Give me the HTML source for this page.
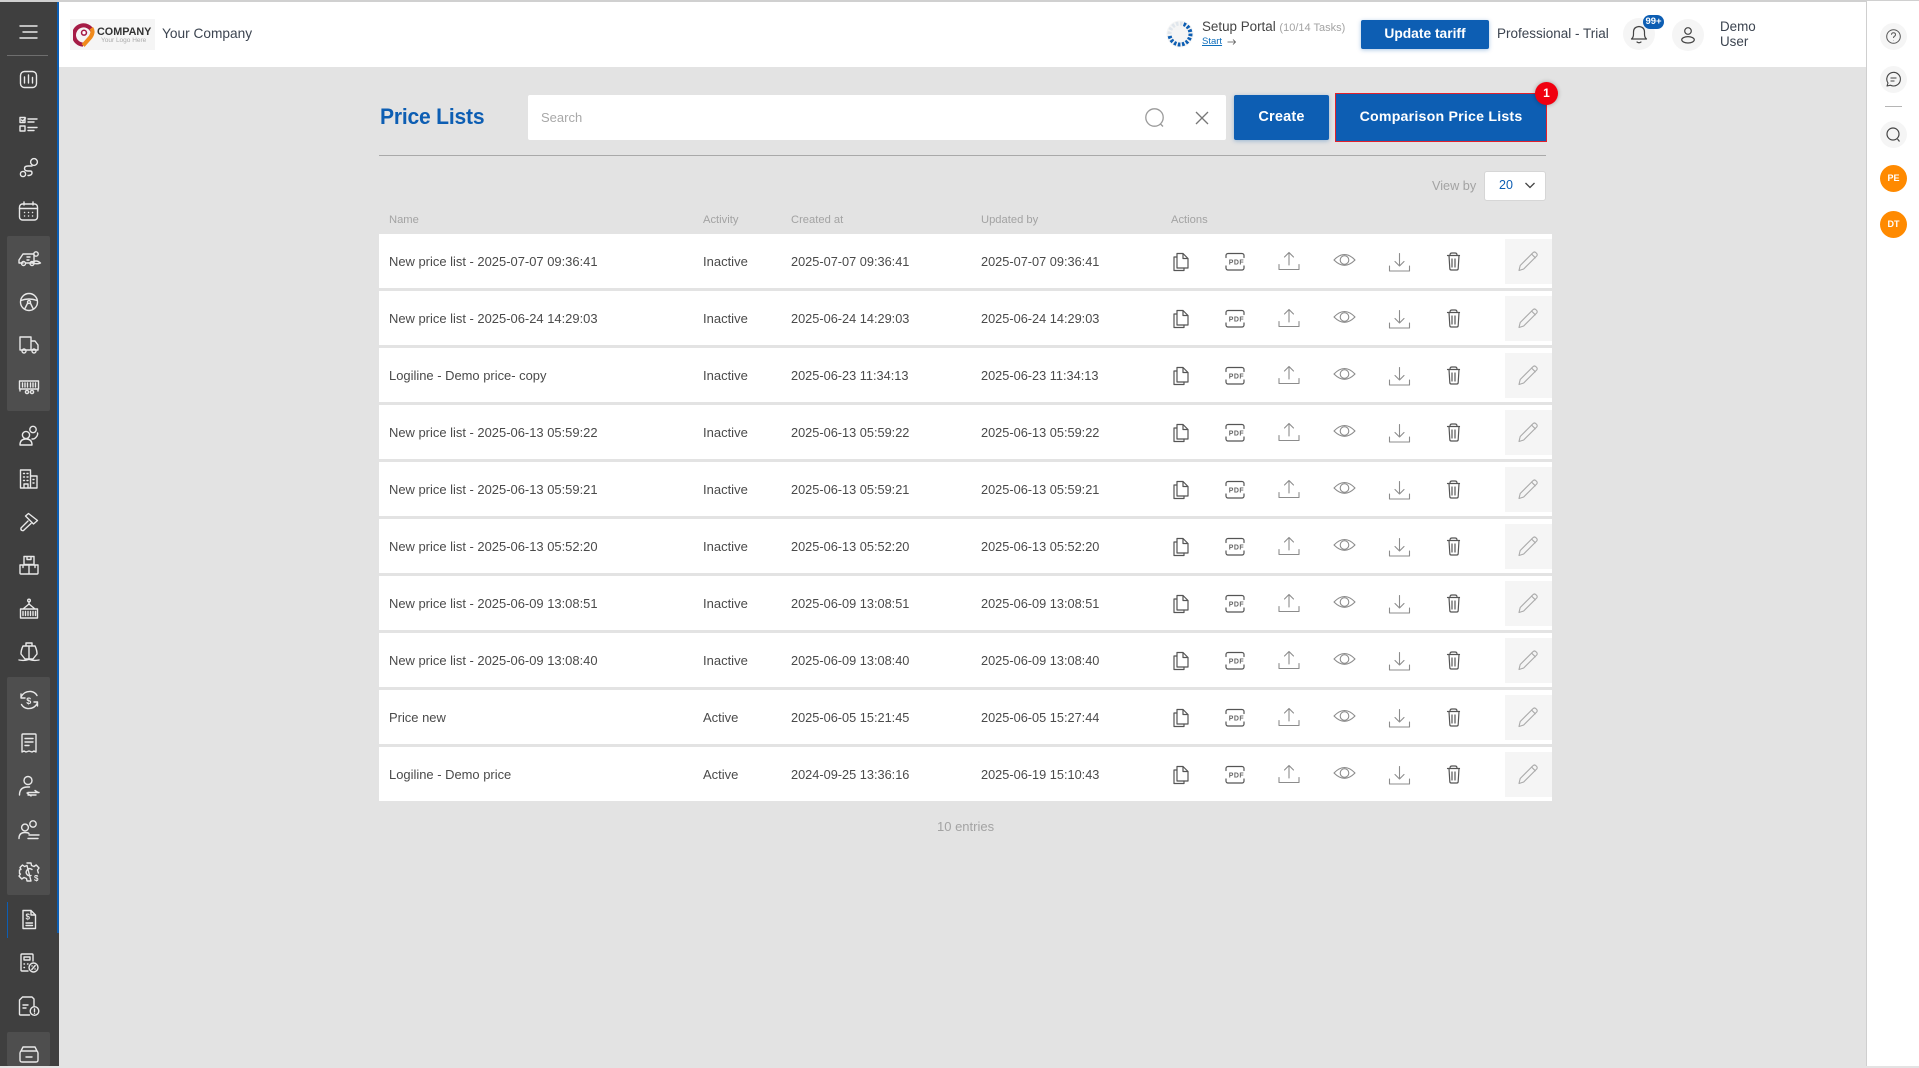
<!DOCTYPE html>
<html lang="en"><head><meta charset="utf-8"><title>Price Lists</title>
<style>
*{box-sizing:border-box}
html,body{margin:0;padding:0;width:1919px;height:1066px;overflow:hidden;background:#e3e3e3;font-family:"Liberation Sans",sans-serif;color:#444}
.a{position:absolute}
.t{position:absolute;white-space:nowrap;line-height:1}
.row{position:absolute;left:379px;width:1173px;height:54px;background:#fff}
.row .t{top:21px;height:13px;line-height:13px;font-size:12.75px;color:#4a4a4a}
.row .n{left:10px;font-size:12.95px}.row .s{left:324px;font-size:13px}.row .c{left:412px}.row .u{left:602px}
.row svg{position:absolute;top:-1px;left:0}
.edit{position:absolute;left:1126px;top:5px;width:47px;height:45px;background:#f5f5f5}
.h{position:absolute;top:214.5px;font-size:11.2px;color:#a3a3a3;line-height:1;white-space:nowrap}
.btn{position:absolute;background:#0d5eb3;color:#fff;font-weight:bold;text-align:center;border-radius:2px;box-shadow:0 1px 4px rgba(13,94,179,.35)}
.circ{position:absolute;border-radius:50%;background:#f5f5f5}
.side svg{position:absolute;left:14px;width:30px;height:30px;fill:none;stroke:#e8e8e8;stroke-width:1.4;stroke-linecap:round;stroke-linejoin:round}
</style></head><body>
<svg width="0" height="0" style="position:absolute"><defs>
<g id="rowicons" fill="none" stroke-linecap="round" stroke-linejoin="round">
<g stroke="#555" stroke-width="1.2">
<path d="M798 20.500h6l5 5v9.500h-11z M804 20.500v5h5"/>
<path d="M798 24h-3v13.500h10v-2.500"/>
<path d="M847 24.500v-2a2 2 0 0 1 2-2h14a2 2 0 0 1 2 2v2M847 33v2a2 2 0 0 0 2 2h14a2 2 0 0 0 2-2v-2"/>
<path d="M1068.500 22.500h12M1071 22.500v-.500q0-2 2-2h3q2 0 2 2v.500M1070 22.500l.8 13q0 1.500 1.500 1.500h5.400q1.500 0 1.500-1.500l.8-13M1073 26v8M1076 26v8"/>
</g>
<text x="849.800" y="31.700" font-family="Liberation Sans,sans-serif" font-size="7" font-weight="bold" fill="#666" letter-spacing=".4">PDF</text>
<g stroke="#8c8c8c" stroke-width="1.100">
<path d="M900 31.500v5h20v-5M910 32V19.500M905.500 24l4.500-4.500 4.500 4.500"/>
<path d="M955 27q10.500-11 21 0-10.500 10.500-21 0z"/><circle cx="965.500" cy="27" r="4.300"/>
<path d="M1010.500 33v5h20v-5M1020.500 20.500V33M1016 28.500l4.500 4.500 4.500-4.500"/>
</g>
<path d="M1140 37.500l1.200-5 13-13q1.300-1 2.500 0l1 1q1 1.200 0 2.500l-13 13zM1152.500 21l3.800 3.800" stroke="#aaa" stroke-width="1.100"/>
</g>
</defs></svg>

<!-- top line & header -->
<div class="a" style="left:59px;top:0;width:1860px;height:67px;background:#fff"></div>
<div class="a" style="left:0;top:0;width:1919px;height:2px;background:#d0d0d0"></div>
<!-- right panel -->
<div class="a" style="left:1866px;top:1px;width:53px;height:1065px;background:#fff;border-left:1px solid #cfcfcf"></div>

<!-- sidebar -->
<div class="a side" style="left:0;top:2px;width:59px;height:1064px;background:#3f3f3f"></div>
<div class="a" style="left:57px;top:2px;width:2px;height:931px;background:#0d5eb3"></div>
<div class="a" style="left:7px;top:236px;width:43px;height:175px;background:#4e4e4e;border-radius:2px"></div>
<div class="a" style="left:7px;top:677px;width:43px;height:218px;background:#4e4e4e;border-radius:2px"></div>
<div class="a" style="left:7px;top:1032px;width:43px;height:34px;background:#4e4e4e;border-radius:2px"></div>
<div class="a" style="left:7px;top:55px;width:41px;height:1px;background:#6e6e6e"></div>
<div class="a" style="left:7px;top:902px;width:1px;height:36px;background:#0d5eb3"></div>
<div class="side">
<svg style="top:17px" viewBox="0 0 30 30"><path d="M6 9h17M9 15h14M6 21h17"/></svg>
<svg style="top:65px" viewBox="0 0 30 30"><rect x="6.500" y="6.500" width="16" height="16" rx="4"/><path d="M10.500 12v6M14.500 10v8M18.500 12.500v5.500"/></svg>
<svg style="top:111px" viewBox="0 0 30 30"><path d="M6 6.500h5v5H6zM6 15h5v5H6zM14 8h9M14 11h6M14 16.500h9M14 19.500h6M7.500 9l1.500 1 2.500-3"/></svg>
<svg style="top:153px" viewBox="0 0 30 30"><circle cx="20" cy="9" r="3.400"/><circle cx="9" cy="21" r="2.600"/><path d="M18 13h-4q-3.500 0-3.500 2.500t3.500 2.500h2q2 0 2 2t-3 2.500h-1"/></svg>
<svg style="top:196px" viewBox="0 0 30 30"><rect x="5.500" y="8" width="18" height="16" rx="3"/><path d="M5.500 12.500h18M10 6v3M19 6v3M10.500 16.500h.1M14.500 16.500h.1M18.500 16.500h.1M10.500 20h.1M14.500 20h.1M18.500 20h.1"/></svg>
<svg style="top:242px" viewBox="0 0 30 30"><path d="M9 21H5v-3l4-6h11v9M12 21h8"/><circle cx="9.500" cy="21.500" r="2"/><circle cx="18" cy="21.500" r="2"/><circle cx="22" cy="12" r="2.200"/><path d="M18.500 21q3-4 8 0-3 1.500-8 0zM13 15h3M13 18h2"/></svg>
<svg style="top:287px" viewBox="0 0 30 30"><circle cx="15" cy="15" r="8.500"/><circle cx="15" cy="15" r="1.500"/><path d="M6.800 13.500q8-3 16.400 0M13.700 16l-3 6M16.300 16l3 6"/></svg>
<svg style="top:329px" viewBox="0 0 30 30"><path d="M6 8h11v13H6zM17 12h4l3 4v5h-7"/><circle cx="10" cy="22" r="2"/><circle cx="20" cy="22" r="2"/></svg>
<svg style="top:373px" viewBox="0 0 30 30"><path d="M5.500 8h19v8h-19zM8.500 10v4M11 10v4M13.500 10v4M16.500 10v4M19 10v4M21.500 10v4M6 16v2M24 16v2"/><circle cx="13" cy="19" r="1.600"/><circle cx="18" cy="19" r="1.600"/></svg>
<svg style="top:421px" viewBox="0 0 30 30"><circle cx="19" cy="8.500" r="3.200"/><circle cx="12" cy="14" r="3.600"/><path d="M6 24q0-6 6-6t6 6zM18 18h1q2 0 4-3 1-2 .5-3"/></svg>
<svg style="top:464px" viewBox="0 0 30 30"><path d="M6.500 6h10v18h-10zM16.500 12h6.500v12h-6.500zM9.500 9.500h1M13 9.500h1M9.500 13h1M13 13h1M9.500 16.500h1M13 16.500h1M10 24v-4h4v4M19 15.500h1M19 19h1"/></svg>
<svg style="top:507px" viewBox="0 0 30 30"><path d="M14.500 6.500l9 7-4 3.500-8-8zM14 14l-7 7q-.5 2 1 2.500t2-.5l7-6.500"/></svg>
<svg style="top:550px" viewBox="0 0 30 30"><path d="M10 6.500h10v8H10zM13 6.500v3h4v-3M6 15h9v9H7q-1 0-1-1zM15 15h9v8q0 1-1 1h-8M9 15v2.500M21 15v2.500"/></svg>
<svg style="top:594px" viewBox="0 0 30 30"><path d="M6.500 15h17v9h-17zM9 17.500v4M11.500 17.500v4M14 17.500v4M16.500 17.500v4M19 17.500v4M21.500 17.500v4M15 10l-6 5M15 10l6 5M15 10V8"/><circle cx="15" cy="6.500" r="1.300"/></svg>
<svg style="top:636px" viewBox="0 0 30 30"><path d="M12 10v-3h6v3M9 10h12q2 4 2 8l-4 5h-8l-4-5q0-4 2-8zM15 10v13M5 24q5 1 10-.500 5 1.500 10 .500"/></svg>
<svg style="top:685px" viewBox="0 0 30 30"><path d="M7 12q3-6 10-5.500 4 .5 6 4M23.500 18q-3 6-10 5.500-4-.5-6-4M7 9v4h4M23.500 21v-4H20"/><text x="12.300" y="19" font-family="Liberation Sans,sans-serif" font-size="9" font-weight="bold" fill="#e8e8e8" stroke="none">$</text></svg>
<svg style="top:728px" viewBox="0 0 30 30"><path d="M8 7q0-1 1-1h12q1 0 1 1v17l-2-1-2 1-3-1-3 1-2-1-2 1zM11 10.500h8M11 14h8M11 17.500h4"/></svg>
<svg style="top:771px" viewBox="0 0 30 30"><circle cx="14" cy="9.500" r="4"/><path d="M5.500 24q0-8 8-8h2M14 21.500h11M14 24h8M21 19.500l3 2M13 22l4 3"/></svg>
<svg style="top:815px" viewBox="0 0 30 30"><circle cx="19" cy="9" r="3.200"/><circle cx="11" cy="12.500" r="3.400"/><path d="M5 23.500q0-6 6-6 3 0 4 1M15 20h10M14 23.500h10"/></svg>
<svg style="top:857px" viewBox="0 0 30 30"><path d="M13 6h4l.5 2.500 2.500 1 2.200-1.500 2.800 3-1.500 2 .8 3M17 24h-4l-.5-2.500-2.500-1-2.200 1.500L5 19l1.500-2-1-.500V13l1.500-.500-1-2 2.500-2.500 2 1.500 2.500-1z"/><path d="M18 12.500q-3-2-5 .500t.5 5q1.500 1 3.500 .500"/><text x="20" y="24" font-family="Liberation Sans,sans-serif" font-size="8" font-weight="bold" fill="#e8e8e8" stroke="none">$</text></svg>
<svg style="top:904px" viewBox="0 0 30 30"><path d="M9 6.500h8l4.500 4.500v13.500H9zM17 6.500V11h4.500M12 19h6.500M12 21.500h6.500"/><text x="11.500" y="15.500" font-family="Liberation Sans,sans-serif" font-size="8" font-weight="bold" fill="#e8e8e8" stroke="none">$</text></svg>
<svg style="top:948px" viewBox="0 0 30 30"><path d="M19 13V7q0-1-1-1H8q-1 0-1 1v15q0 1 1 1h6M10 9h6v3h-6zM10 16h.5M10 19.500h.5M13.500 16h.5"/><circle cx="19.500" cy="19.500" r="4.500"/><path d="M17.800 21.500l3.400-4M18 18h.1M21 21h.1"/></svg>
<svg style="top:991px" viewBox="0 0 30 30"><path d="M15 6H8.500L5.500 9v14q0 1 1 1h9M15 6h3l2 2v7M9 14h5M9 17h3"/><circle cx="20.500" cy="20" r="4.300"/><path d="M20.500 18v2.500M20.500 22.200v.1"/></svg>
<svg style="top:1038px" viewBox="0 0 30 30"><path d="M7 13l2-4h12l2 4q1 1 1 2v7q0 2-2 2H8q-2 0-2-2v-7q0-1 1-2zM7 13h16M12 19h6"/></svg>
</div>

<!-- logo -->
<div class="a" style="left:70px;top:19px;width:85px;height:31px;background:#f5f5f5"></div>
<svg class="a" style="left:73px;top:22px" width="22" height="26" viewBox="0 0 24 27">
<path d="M11 24A10.500 10.500 0 1 1 21 9" fill="none" stroke="#a51c46" stroke-width="4.500"/>
<path d="M11 25l8-9q4-6 1-10" fill="none" stroke="#f08a1c" stroke-width="4.500"/>
<circle cx="12" cy="11" r="3.500" fill="#a51c46"/><circle cx="12" cy="11" r="1.800" fill="#fff"/>
</svg>
<div class="t" style="left:97px;top:27px;font-size:10.800px;font-weight:bold;color:#333">COMPANY</div>
<div class="t" style="left:101px;top:38px;font-size:6.500px;color:#aaa">Your Logo Here</div>
<div class="t" style="left:162px;top:27px;font-size:13.700px;color:#3c4450">Your Company</div>

<!-- setup portal -->
<svg class="a" style="left:1166px;top:20px" width="28" height="28" viewBox="0 0 28 28">
<circle cx="14" cy="14" r="13.500" fill="#f5f5f5"/>
<circle cx="14" cy="14" r="10.500" fill="none" stroke="#e0e6ec" stroke-width="4" stroke-dasharray="2.500 1.600"/>
<circle cx="14" cy="14" r="10.500" fill="none" stroke="#0d5eb3" stroke-width="4" stroke-dasharray="2.500 1.600 2.500 1.600 2.500 1.600 2.500 1.600 2.500 1.600 2.500 1.600 2.500 1.600 2.500 1.600 2.500 1.600 2.500 1.600 2.500 100" transform="rotate(-70 14 14)"/>
</svg>
<div class="t" style="left:1202px;top:20px;font-size:13.400px;color:#444">Setup Portal <span style="font-size:11px;color:#a3a3a3">(10/14 Tasks)</span></div>
<div class="t" style="left:1202px;top:37px;font-size:9.500px;color:#0d6ebc;text-decoration:underline">Start</div>
<svg class="a" style="left:1227px;top:38px" width="10" height="8"><path d="M.5 4h8M6 1.500L8.500 4 6 6.500" fill="none" stroke="#555" stroke-width=".8"/></svg>
<div class="btn" style="left:1361px;top:20px;width:128px;height:29px;font-size:13.800px;line-height:27px">Update tariff</div>
<div class="t" style="left:1497px;top:27px;font-size:13.500px;color:#3c4450">Professional - Trial</div>

<!-- bell -->
<div class="circ" style="left:1623px;top:18px;width:32px;height:32px"></div>
<svg class="a" style="left:1629px;top:24px" width="20" height="21" viewBox="0 0 20 21"><path d="M2.500 15q2-1.500 2-5v-2q0-5 5.500-5.500 5.500.5 5.500 5.500v2q0 3.500 2 5zM8 18q2 1.500 4 0" fill="none" stroke="#444" stroke-width="1.200" stroke-linejoin="round" stroke-linecap="round"/></svg>
<div class="a" style="left:1643px;top:15px;width:21px;height:14px;border-radius:7px;background:#0d5eb3;color:#fff;font-size:9.500px;font-weight:bold;text-align:center;line-height:14px">99+</div>
<div class="circ" style="left:1672px;top:19px;width:32px;height:32px"></div>
<svg class="a" style="left:1680px;top:26px" width="16" height="19" viewBox="0 0 16 19"><circle cx="8" cy="5" r="3.300" fill="none" stroke="#444" stroke-width="1.200"/><ellipse cx="8" cy="13.800" rx="6.300" ry="3.200" fill="none" stroke="#444" stroke-width="1.200"/></svg>
<div class="t" style="left:1720px;top:20px;font-size:13.400px;color:#3c4450">Demo</div>
<div class="t" style="left:1720px;top:35px;font-size:13.400px;color:#3c4450">User</div>

<!-- right rail -->
<div class="circ" style="left:1880px;top:23px;width:27px;height:27px"></div>
<svg class="a" style="left:1885px;top:28px" width="17" height="17" viewBox="0 0 17 17"><circle cx="8.500" cy="8.500" r="6.800" fill="none" stroke="#555" stroke-width="1"/><path d="M6.500 6.800q0-2 2-2t2 1.800q0 1-1 1.600-1 .6-1 1.800M8.500 12v.3" fill="none" stroke="#555" stroke-width="1"/></svg>
<div class="circ" style="left:1880px;top:66px;width:27px;height:27px"></div>
<svg class="a" style="left:1885px;top:71px" width="17" height="17" viewBox="0 0 17 17"><path d="M2 15l1-3a6.800 6.800 0 1 1 2.500 2.200zM5.500 7h6M5.500 10h4" fill="none" stroke="#444" stroke-width="1.100" stroke-linejoin="round"/></svg>
<div class="a" style="left:1885px;top:106px;width:17px;height:1px;background:#b5b5b5"></div>
<div class="circ" style="left:1880px;top:121px;width:27px;height:27px"></div>
<svg class="a" style="left:1885px;top:126px" width="17" height="17" viewBox="0 0 17 17"><circle cx="8" cy="8" r="6" fill="none" stroke="#444" stroke-width="1.200"/><path d="M12.500 13l2 2.500" stroke="#444" stroke-width="1.200"/></svg>
<div class="a" style="left:1880px;top:165px;width:27px;height:27px;border-radius:50%;background:#ff8a00;color:#fff;font-size:9px;font-weight:bold;text-align:center;line-height:27px">PE</div>
<div class="a" style="left:1880px;top:211px;width:27px;height:27px;border-radius:50%;background:#ff8a00;color:#fff;font-size:9px;font-weight:bold;text-align:center;line-height:27px">DT</div>

<!-- page header -->
<div class="t" style="left:380px;top:106px;font-size:22.500px;font-weight:bold;color:#0d5eb3;letter-spacing:-.2px;transform:scaleX(.935);transform-origin:left">Price Lists</div>
<div class="a" style="left:528px;top:95px;width:698px;height:45px;background:#fff;border-radius:2px"></div>
<div class="t" style="left:541px;top:111px;font-size:13px;color:#a8a8a8">Search</div>
<svg class="a" style="left:1143px;top:106px" width="24" height="24" viewBox="0 0 24 24"><circle cx="11.500" cy="11.500" r="8.700" fill="none" stroke="#9a9a9a" stroke-width="1.300"/><path d="M17.500 18l2.500 2.500" stroke="#9a9a9a" stroke-width="1.300"/></svg>
<svg class="a" style="left:1194px;top:110px" width="16" height="16" viewBox="0 0 16 16"><path d="M2 2l12 12M14 2L2 14" stroke="#777" stroke-width="1.300"/></svg>
<div class="btn" style="left:1234px;top:95px;width:95px;height:45px;font-size:14.500px;line-height:45px;letter-spacing:.2px">Create</div>
<div class="a" style="left:1335px;top:93px;width:212px;height:49px;border:1px solid #e1202c"></div>
<div class="btn" style="left:1336px;top:94px;width:210px;height:47px;font-size:14.200px;line-height:47px;letter-spacing:.2px;border-radius:0;box-shadow:none">Comparison Price Lists</div>
<div class="a" style="left:1535px;top:82px;width:23px;height:23px;border-radius:50%;background:#f00010;color:#fff;font-size:12px;font-weight:bold;text-align:center;line-height:23px;box-shadow:0 0 4px rgba(0,0,0,.3)">1</div>
<div class="a" style="left:379px;top:155px;width:1167px;height:1px;background:#a9a9a9"></div>

<div class="t" style="left:1432px;top:180px;font-size:12.700px;color:#a3a3a3">View by</div>
<div class="a" style="left:1484px;top:171px;width:62px;height:30px;background:#fff;border:1px solid #d6d6d6;border-radius:3px"></div>
<div class="t" style="left:1499px;top:179px;font-size:12.500px;color:#0d5eb3">20</div>
<svg class="a" style="left:1524px;top:181px" width="12" height="9"><path d="M1.500 2l4.500 4.500L10.500 2" fill="none" stroke="#444" stroke-width="1.300"/></svg>

<div class="h" style="left:389px">Name</div>
<div class="h" style="left:703px">Activity</div>
<div class="h" style="left:791px">Created at</div>
<div class="h" style="left:981px">Updated by</div>
<div class="h" style="left:1171px">Actions</div>

<div class="row" style="top:234px"><div class="t n">New price list - 2025-07-07 09:36:41</div><div class="t s">Inactive</div><div class="t c">2025-07-07 09:36:41</div><div class="t u">2025-07-07 09:36:41</div><div class="edit"></div><svg width="1173" height="54"><use href="#rowicons"/></svg></div>
<div class="row" style="top:291px"><div class="t n">New price list - 2025-06-24 14:29:03</div><div class="t s">Inactive</div><div class="t c">2025-06-24 14:29:03</div><div class="t u">2025-06-24 14:29:03</div><div class="edit"></div><svg width="1173" height="54"><use href="#rowicons"/></svg></div>
<div class="row" style="top:348px"><div class="t n">Logiline - Demo price- copy</div><div class="t s">Inactive</div><div class="t c">2025-06-23 11:34:13</div><div class="t u">2025-06-23 11:34:13</div><div class="edit"></div><svg width="1173" height="54"><use href="#rowicons"/></svg></div>
<div class="row" style="top:405px"><div class="t n">New price list - 2025-06-13 05:59:22</div><div class="t s">Inactive</div><div class="t c">2025-06-13 05:59:22</div><div class="t u">2025-06-13 05:59:22</div><div class="edit"></div><svg width="1173" height="54"><use href="#rowicons"/></svg></div>
<div class="row" style="top:462px"><div class="t n">New price list - 2025-06-13 05:59:21</div><div class="t s">Inactive</div><div class="t c">2025-06-13 05:59:21</div><div class="t u">2025-06-13 05:59:21</div><div class="edit"></div><svg width="1173" height="54"><use href="#rowicons"/></svg></div>
<div class="row" style="top:519px"><div class="t n">New price list - 2025-06-13 05:52:20</div><div class="t s">Inactive</div><div class="t c">2025-06-13 05:52:20</div><div class="t u">2025-06-13 05:52:20</div><div class="edit"></div><svg width="1173" height="54"><use href="#rowicons"/></svg></div>
<div class="row" style="top:576px"><div class="t n">New price list - 2025-06-09 13:08:51</div><div class="t s">Inactive</div><div class="t c">2025-06-09 13:08:51</div><div class="t u">2025-06-09 13:08:51</div><div class="edit"></div><svg width="1173" height="54"><use href="#rowicons"/></svg></div>
<div class="row" style="top:633px"><div class="t n">New price list - 2025-06-09 13:08:40</div><div class="t s">Inactive</div><div class="t c">2025-06-09 13:08:40</div><div class="t u">2025-06-09 13:08:40</div><div class="edit"></div><svg width="1173" height="54"><use href="#rowicons"/></svg></div>
<div class="row" style="top:690px"><div class="t n">Price new</div><div class="t s">Active</div><div class="t c">2025-06-05 15:21:45</div><div class="t u">2025-06-05 15:27:44</div><div class="edit"></div><svg width="1173" height="54"><use href="#rowicons"/></svg></div>
<div class="row" style="top:747px"><div class="t n">Logiline - Demo price</div><div class="t s">Active</div><div class="t c">2024-09-25 13:36:16</div><div class="t u">2025-06-19 15:10:43</div><div class="edit"></div><svg width="1173" height="54"><use href="#rowicons"/></svg></div>

<div class="t" style="left:937px;top:820px;font-size:13px;color:#a3a3a3">10 entries</div>
</body></html>
